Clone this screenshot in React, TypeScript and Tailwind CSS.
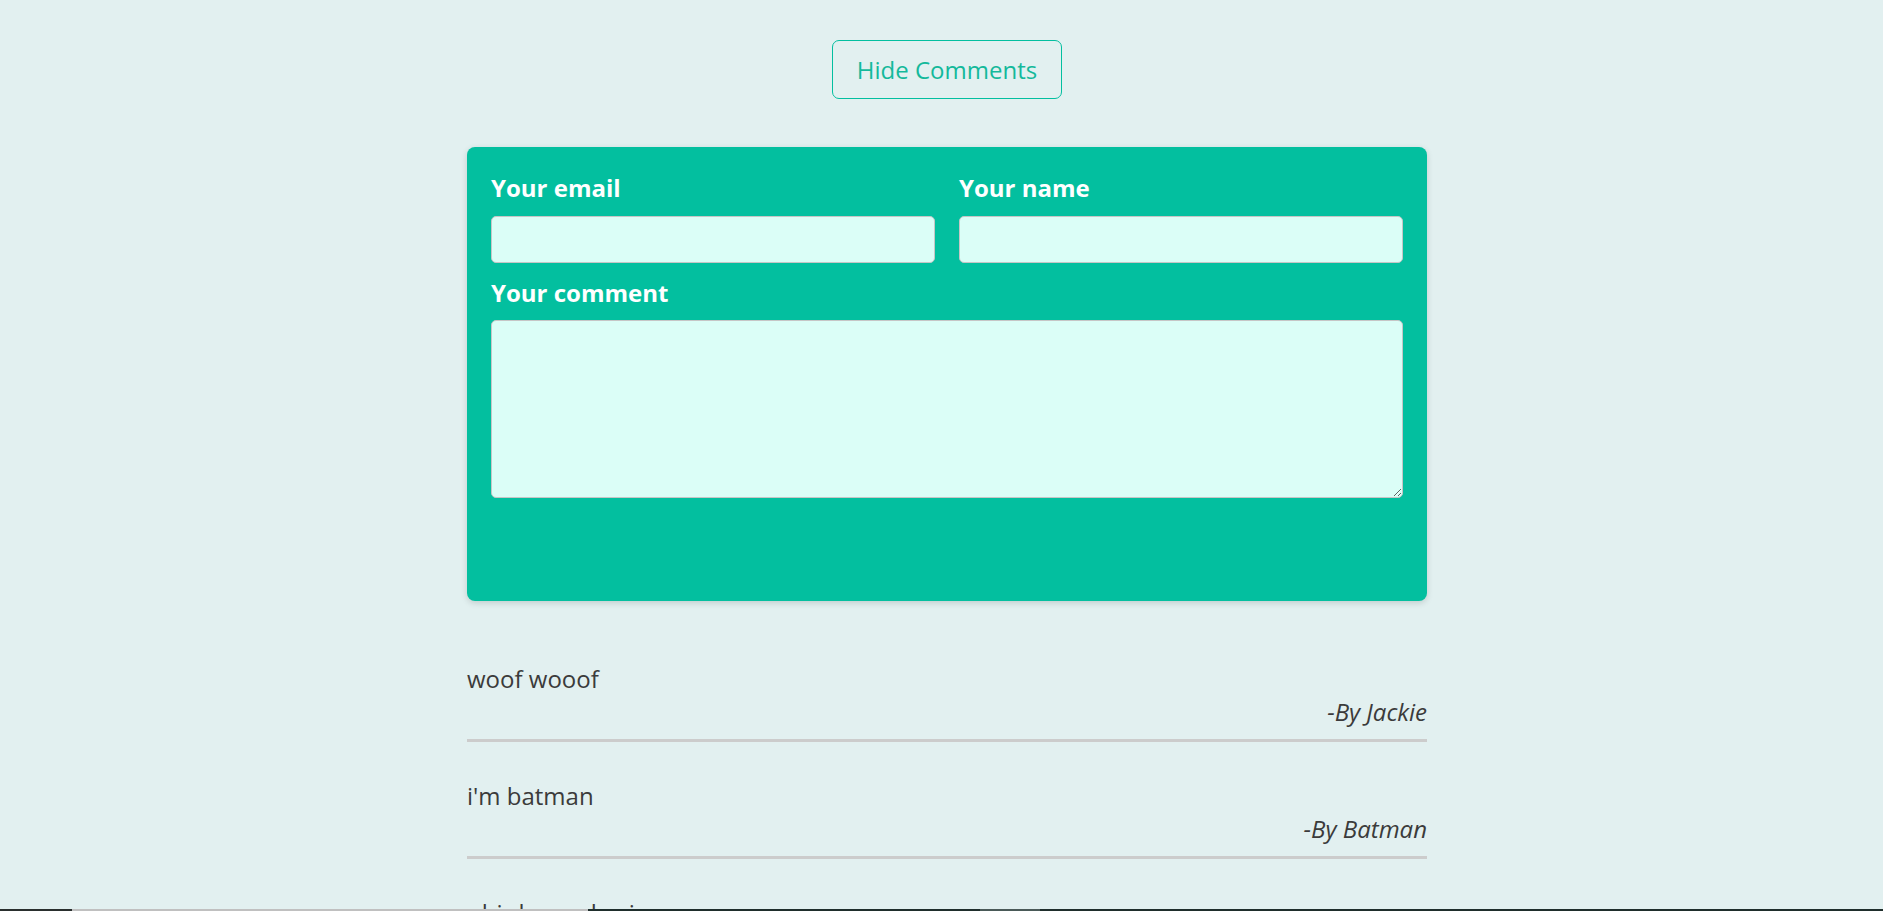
import React from "react";

const comments = [
  { text: "woof wooof", by: "Jackie" },
  { text: "i'm batman", by: "Batman" },
  { text: "phir hera pheri", by: "Raju" },
];

export default function App() {
  return (
    <div className="min-h-screen bg-[#e2f0f0] font-['Open_Sans',sans-serif] pl-[11px] pb-10">
      <div className="w-[960px] mx-auto pt-[40px]">
        <div className="flex justify-center">
          <button className="h-[59px] w-[230px] border border-[#03bfa0] rounded-[7px] text-[#14b99b] text-[24px] bg-transparent">
            Hide Comments
          </button>
        </div>

        <div className="mt-[48px] bg-[#03bf9f] rounded-lg px-6 pt-6 pb-[103px] shadow-[0_2px_6px_rgba(0,0,0,0.15)]">
          <div className="grid grid-cols-2 gap-x-6">
            <div>
              <label className="block text-[24px] leading-[33px] font-bold text-white">Your email</label>
              <input
                type="email"
                className="mt-3 block w-full h-[47px] rounded-[5px] border border-[#c6c6c6] bg-[#dbfef7] outline-none px-2"
              />
            </div>
            <div>
              <label className="block text-[24px] leading-[33px] font-bold text-white">Your name</label>
              <input
                type="text"
                className="mt-3 block w-full h-[47px] rounded-[5px] border border-[#c6c6c6] bg-[#dbfef7] outline-none px-2"
              />
            </div>
          </div>
          <label className="mt-[13px] block text-[24px] leading-[33px] font-bold text-white">Your comment</label>
          <textarea className="mt-[11px] block w-full h-[178px] rounded-[5px] border border-[#c6c6c6] bg-[#dbfef7] outline-none p-2" />
        </div>

        <div className="mt-[61px] flex flex-col gap-[37px]">
          {comments.map((c) => (
            <div key={c.text} className="border-b-[3px] border-[#cccccc] pb-[11px] text-[24px] leading-[33px] text-[#3b3b3b]">
              <p>{c.text}</p>
              <p className="text-right italic">-By {c.by}</p>
            </div>
          ))}
        </div>
      </div>

      <div className="fixed bottom-0 left-0 right-0 h-[2px] flex">
        <div className="w-[72px] bg-[#2a2f2e]" />
        <div className="w-[516px] bg-[#c0c0c0]" />
        <div className="w-[392px] bg-[#1f2e2c]" />
        <div className="w-[60px] bg-[#4a5a58]" />
        <div className="flex-1 bg-[#1f2e2c]" />
      </div>
    </div>
  );
}
